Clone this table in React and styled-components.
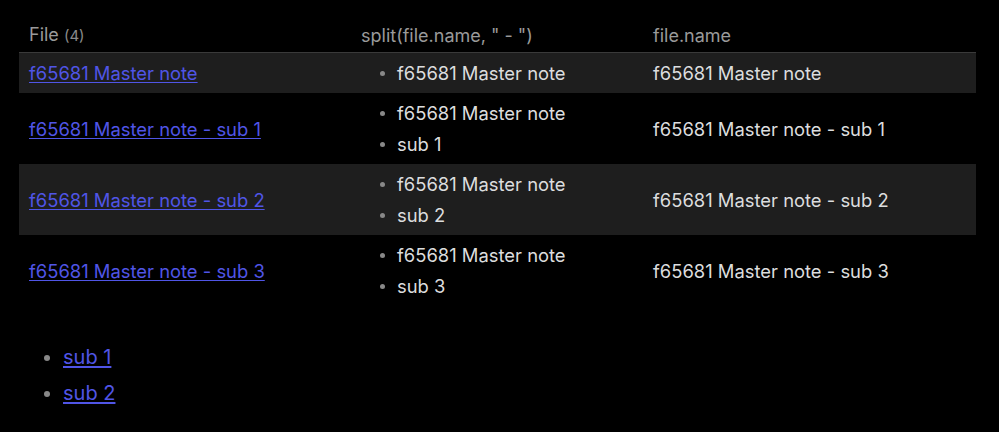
import styled, { createGlobalStyle } from 'styled-components';

const GlobalStyle = createGlobalStyle`
  html, body {
    margin: 0;
    padding: 0;
    background: #000;
  }
  body {
    font-family: Inter, 'Noto Sans', sans-serif;
    color: #dcddde;
  }
`;

const rows = [
  { name: 'f65681 Master note', parts: ['f65681 Master note'] },
  { name: 'f65681 Master note - sub 1', parts: ['f65681 Master note', 'sub 1'] },
  { name: 'f65681 Master note - sub 2', parts: ['f65681 Master note', 'sub 2'] },
  { name: 'f65681 Master note - sub 3', parts: ['f65681 Master note', 'sub 3'] },
];

const App = () => {
  return (
    <SPage>
      <GlobalStyle />
      <STable>
        <thead>
          <tr>
            <SHead>
              File <SCount>(4)</SCount>
            </SHead>
            <SHead>split(file.name, " - ")</SHead>
            <SHead>file.name</SHead>
          </tr>
        </thead>
        <tbody>
          {rows.map((row, i) => (
            <SRow key={row.name} $striped={i % 2 === 0}>
              <SCell>
                <SLink href="#">{row.name}</SLink>
              </SCell>
              <SCell>
                <SCellList>
                  {row.parts.map((p) => (
                    <SCellItem key={p}>{p}</SCellItem>
                  ))}
                </SCellList>
              </SCell>
              <SCell>{row.name}</SCell>
            </SRow>
          ))}
        </tbody>
      </STable>
      <SBottomList>
        <SBottomItem>
          <SLink href="#">sub 1</SLink>
        </SBottomItem>
        <SBottomItem>
          <SLink href="#">sub 2</SLink>
        </SBottomItem>
      </SBottomList>
    </SPage>
  );
};

export default App;

const SPage = styled.div`
  padding: 20px 23px 0 19px;
  width: 957px;
`;

const STable = styled.table`
  width: 957px;
  border-collapse: collapse;
  table-layout: fixed;
  font-size: 18.4px;
`;

const SHead = styled.th`
  text-align: left;
  font-weight: 400;
  font-size: 18px;
  color: #9a9a9a;
  padding: 4px 10px 6px;
  height: 21px;
  line-height: 21px;
  border-bottom: 1px solid #3a3a3a;

  &:nth-child(1) {
    width: 312px;
  }
  &:nth-child(2) {
    width: 272px;
  }
`;

const SCount = styled.span`
  font-size: 15px;
  color: #8a8a8a;
`;

const SRow = styled.tr`
  background: ${(p) => (p.$striped ? '#1e1e1e' : 'transparent')};
`;

const SCell = styled.td`
  padding: 8px 10px;
  line-height: 24px;
  vertical-align: middle;
  color: #dcddde;
`;

const SLink = styled.a`
  color: #5055e6;
  text-decoration: underline;
  text-underline-offset: 2px;
`;

const SCellList = styled.ul`
  margin: 0;
  padding-left: 36px;
  display: flex;
  flex-direction: column;
  gap: 7px;
`;

const SCellItem = styled.li`
  list-style: none;
  position: relative;

  &::before {
    content: '';
    position: absolute;
    left: -17px;
    top: 10px;
    width: 5px;
    height: 5px;
    border-radius: 50%;
    background: #888;
  }
`;

const SBottomList = styled.ul`
  margin: 38px 0 0;
  padding-left: 44px;
  font-size: 20px;
  display: flex;
  flex-direction: column;
  gap: 10px;
`;

const SBottomItem = styled.li`
  list-style: none;
  position: relative;
  line-height: 26px;

  &::before {
    content: '';
    position: absolute;
    left: -19px;
    top: 11px;
    width: 6px;
    height: 6px;
    border-radius: 50%;
    background: #888;
  }
`;
